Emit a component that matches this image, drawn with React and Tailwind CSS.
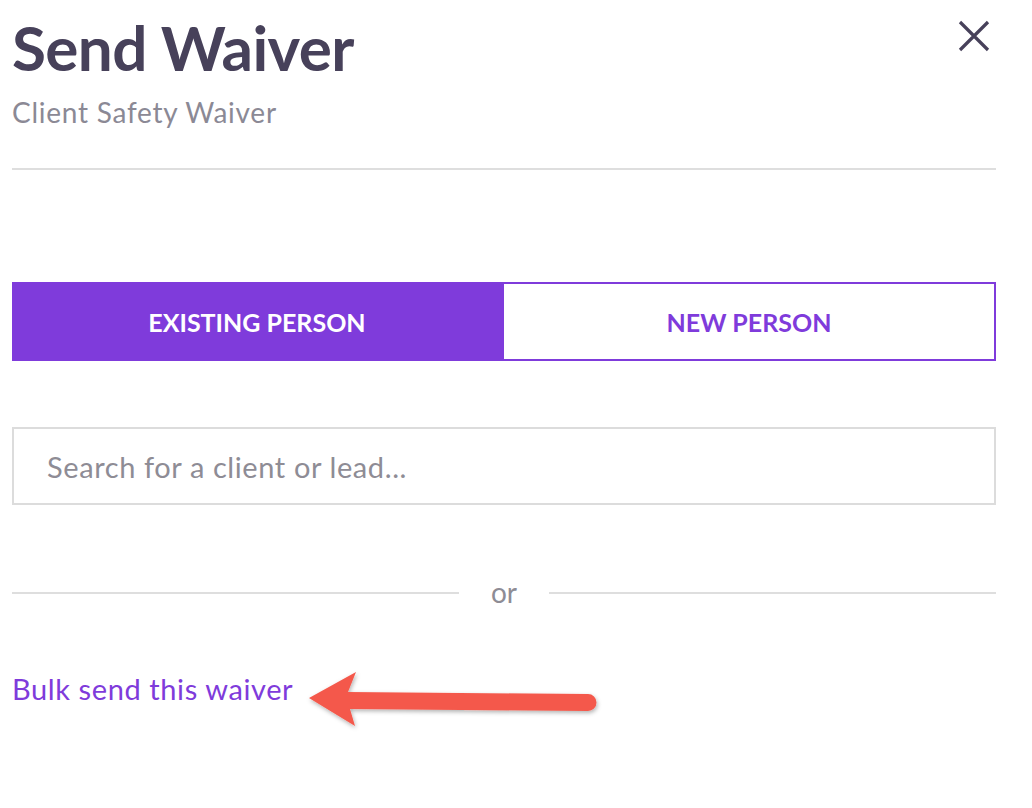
import React from "react";

export default function App() {
  return (
    <div className="w-[1032px] h-[808px] bg-white overflow-hidden" style={{ fontFamily: "Lato, 'Open Sans', sans-serif" }}>
      <div className="pl-[12px] pr-[36px] pt-[16px]">
        <div className="flex items-start justify-between">
          <div>
            <h1 className="text-[62px] leading-none font-bold text-[#47415a] tracking-[-0.6px]">Send Waiver</h1>
            <div className="mt-[20px] text-[28px] leading-none text-[#8b8995] tracking-[0.75px]">Client Safety Waiver</div>
          </div>
          <button className="mt-[2px] mr-[4px] w-[36px] h-[36px] flex items-center justify-center text-[#47415a]">
            <svg width="32" height="32" viewBox="0 0 32 32" fill="none" stroke="currentColor" strokeWidth="3.2">
              <path d="M2 2 L30 30 M30 2 L2 30" />
            </svg>
          </button>
        </div>
        <div className="mt-[42px] h-[2px] bg-[#dedede]" />

        <div className="mt-[112px] flex h-[79px]">
          <button className="flex-1 bg-[#7f3bdb] text-white font-bold text-[25px] leading-none pt-[2px] flex items-center justify-center">
            EXISTING PERSON
          </button>
          <button className="flex-1 bg-white border-2 border-[#7f3bdb] text-[#7f3bdb] font-bold text-[25px] leading-none pt-[2px] flex items-center justify-center">
            NEW PERSON
          </button>
        </div>

        <div className="mt-[66px] h-[78px] border-2 border-[#dcdcdc] flex items-center pl-[33px]">
          <span className="text-[29px] leading-none text-[#8e8c95] tracking-[0.6px]">Search for a client or lead...</span>
        </div>

        <div className="mt-[73px] h-[30px] flex items-center">
          <div className="flex-1 h-[2px] bg-[#dedede]" />
          <span className="px-[32px] text-[28px] leading-none text-[#8e8c95] pb-[2px]">or</span>
          <div className="flex-1 h-[2px] bg-[#dedede]" />
        </div>

        <div className="mt-[66px] flex items-start">
          <a className="text-[29px] leading-none text-[#7f3bdb] tracking-[0.6px]">Bulk send this waiver</a>
          <svg width="310" height="80" viewBox="0 0 310 80" className="ml-[5px] mt-[-14px]">
            <defs>
              <filter id="sh" x="-10%" y="-30%" width="120%" height="160%">
                <feDropShadow dx="1" dy="2" stdDeviation="2" floodColor="#000" floodOpacity="0.3" />
              </filter>
            </defs>
            <path
              d="M11 38 L58 12 L50 32 L290 34 A8.5 8.5 0 0 1 290 51 L52 49 L57 66 Z"
              fill="#f4594b"
              filter="url(#sh)"
            />
          </svg>
        </div>
      </div>
    </div>
  );
}
